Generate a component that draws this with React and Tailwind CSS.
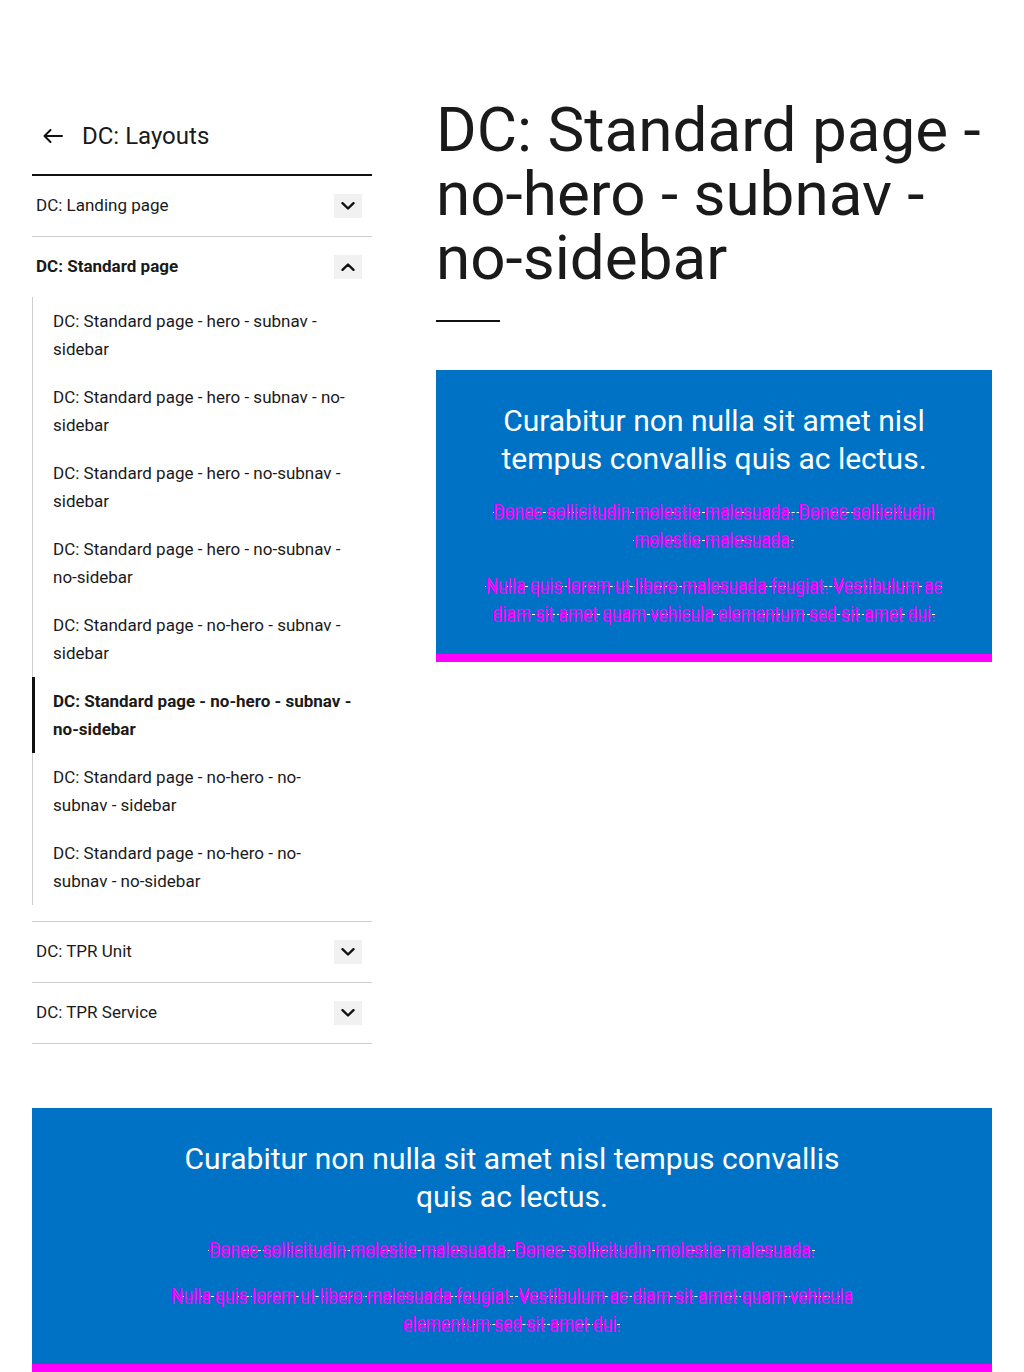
import React from "react";

const Chevron = ({ up }) => (
  <span className="flex h-6 w-7 items-center justify-center bg-[#f1f1f1]">
    <svg width="14" height="8" viewBox="0 0 14 8" fill="none" stroke="#111" strokeWidth="2.4" strokeLinecap="round" strokeLinejoin="round">
      {up ? <polyline points="1.5,6.8 7,1.5 12.5,6.8" /> : <polyline points="1.5,1.2 7,6.5 12.5,1.2" />}
    </svg>
  </span>
);

const NavRow = ({ label, bold, up, border = true }) => (
  <div className={`flex items-center justify-between pl-1 pr-[10px] ${border ? "h-[61px] border-b border-[#cfcfcf]" : "h-[60px]"}`}>
    <span className={`text-[17px] ${bold ? "font-bold" : ""}`}>{label}</span>
    <Chevron up={up} />
  </div>
);

const subItems = [
  ["DC: Standard page - hero - subnav -", "sidebar"],
  ["DC: Standard page - hero - subnav - no-", "sidebar"],
  ["DC: Standard page - hero - no-subnav -", "sidebar"],
  ["DC: Standard page - hero - no-subnav -", "no-sidebar"],
  ["DC: Standard page - no-hero - subnav -", "sidebar"],
  ["DC: Standard page - no-hero - subnav -", "no-sidebar", true],
  ["DC: Standard page - no-hero - no-", "subnav - sidebar"],
  ["DC: Standard page - no-hero - no-", "subnav - no-sidebar"],
];

const Glitch = ({ children }) => (
  <p className="relative mb-4 pt-[2px] text-[17.3px] leading-7 text-[#ff00ff] last:mb-0">
    <span className="underline decoration-white decoration-dashed decoration-1 underline-offset-[-4px]">{children}</span>
    <span aria-hidden="true" className="absolute inset-x-0 top-[6px]">{children}</span>
  </p>
);

export default function App() {
  return (
    <div className="min-h-[1372px] bg-white px-8 pt-24 font-[Roboto,sans-serif] text-[#1a1a1a]">
      <div className="flex gap-16">
        <aside className="w-[340px] shrink-0">
          <div className="flex items-center gap-[19px] border-b-2 border-[#111] pb-[22px] pl-[11px] pt-6">
            <svg width="20" height="14" viewBox="0 0 20 14" fill="none" stroke="#111" strokeWidth="2" strokeLinecap="round" strokeLinejoin="round">
              <path d="M19 7H1.5M7.5 1L1.5 7l6 6" />
            </svg>
            <span className="text-[24px] leading-8">DC: Layouts</span>
          </div>
          <NavRow label="DC: Landing page" />
          <div className="border-b border-[#cfcfcf] pb-4">
            <NavRow label="DC: Standard page" bold up border={false} />
            <ul className="border-l border-[#cfcfcf]">
              {subItems.map(([a, b, active], i) => (
                <li
                  key={i}
                  className={`py-[10px] pr-4 text-[17px] leading-7 ${active ? "-ml-px border-l-[3px] border-[#111] pl-[18px] font-bold" : "pl-5"}`}
                >
                  <span className="block whitespace-nowrap">{a}</span>
                  <span className="block whitespace-nowrap">{b}</span>
                </li>
              ))}
            </ul>
          </div>
          <NavRow label="DC: TPR Unit" />
          <NavRow label="DC: TPR Service" />
        </aside>

        <main className="w-[556px] pt-[2px]">
          <h1 className="text-[62px] leading-[64px] font-normal">
            <span className="block whitespace-nowrap">DC: Standard page -</span>
            <span className="block whitespace-nowrap">no-hero - subnav -</span>
            <span className="block whitespace-nowrap">no-sidebar</span>
          </h1>
          <div className="mt-[30px] h-[2px] w-16 bg-[#111]" />
          <section className="mt-12 border-b-8 border-[#ff00ff] bg-[#0072c6] px-12 pb-[28px] pt-8 text-center">
            <h2 className="mb-4 text-[30px] leading-[38px] text-white">
              Curabitur non nulla sit amet nisl tempus convallis quis ac lectus.
            </h2>
            <Glitch>Donec sollicitudin molestie malesuada. Donec sollicitudin molestie malesuada.</Glitch>
            <Glitch>Nulla quis lorem ut libero malesuada feugiat. Vestibulum ac diam sit amet quam vehicula elementum sed sit amet dui.</Glitch>
          </section>
        </main>
      </div>

      <section className="mt-16 border-b-8 border-[#ff00ff] bg-[#0072c6] px-12 pb-[28px] pt-8 text-center">
        <div className="mx-auto max-w-[700px]">
          <h2 className="mb-4 text-[30px] leading-[38px] text-white">
            Curabitur non nulla sit amet nisl tempus convallis quis ac lectus.
          </h2>
          <Glitch>Donec sollicitudin molestie malesuada. Donec sollicitudin molestie malesuada.</Glitch>
          <Glitch>Nulla quis lorem ut libero malesuada feugiat. Vestibulum ac diam sit amet quam vehicula elementum sed sit amet dui.</Glitch>
        </div>
      </section>
    </div>
  );
}
